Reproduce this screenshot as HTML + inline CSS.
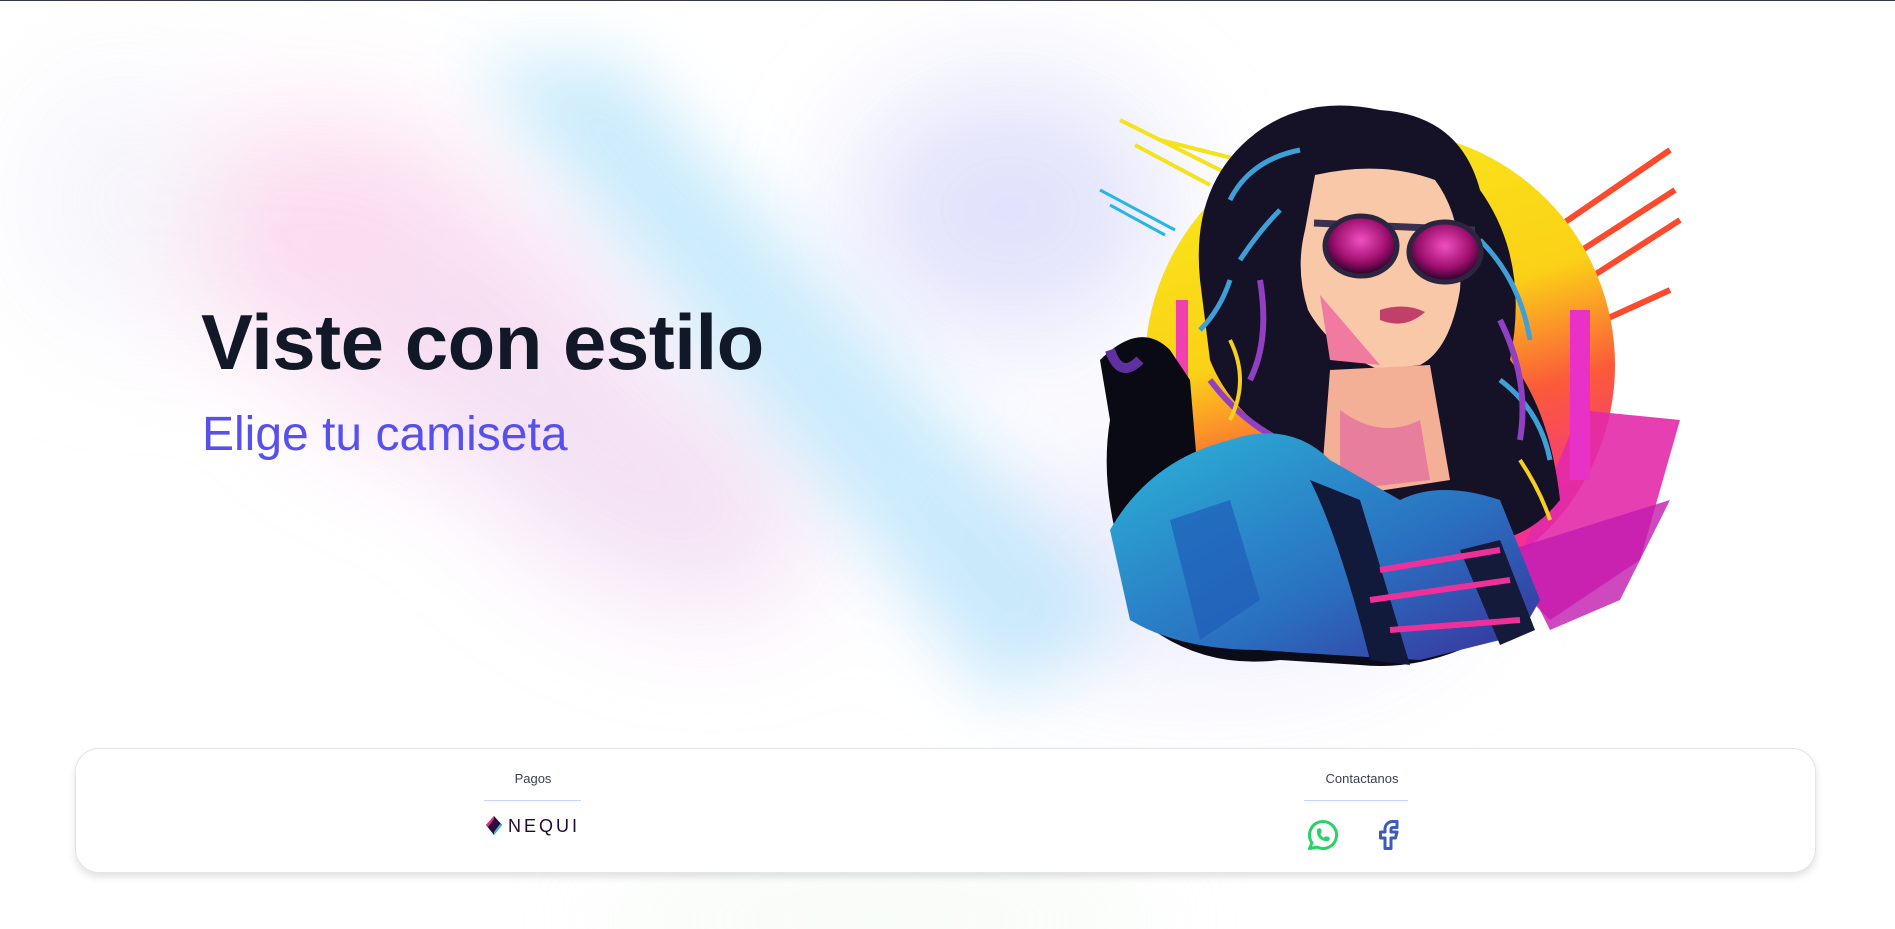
<!DOCTYPE html>
<html><head><meta charset="utf-8"><style>
*{margin:0;padding:0;box-sizing:border-box}
html,body{width:1895px;height:929px;overflow:hidden;background:#fff;font-family:"Liberation Sans",sans-serif}
.top{position:absolute;left:0;top:0;width:1895px;height:1px;background:#333645}
.bg{position:absolute;left:0;top:0;width:1895px;height:929px}
h1{position:absolute;left:201px;top:297px;font-size:78px;font-weight:700;color:#111827;letter-spacing:-0.5px;white-space:nowrap}
h2{position:absolute;left:202px;top:407px;font-size:48px;font-weight:400;color:#5850ec;white-space:nowrap}
.card{position:absolute;left:75px;top:748px;width:1741px;height:125px;background:#fff;border:1px solid #e3e5ea;border-radius:24px;box-shadow:0 4px 8px rgba(0,0,0,.12)}
.lbl{position:absolute;font-size:13px;color:#374151;text-align:center}
.ln{position:absolute;height:1px;background:#c7d2fe}
</style></head><body>
<svg class="bg" viewBox="0 0 1895 929">
<defs>
<filter id="b" x="-50%" y="-50%" width="200%" height="200%"><feGaussianBlur stdDeviation="60"/></filter>
<filter id="b2" x="-50%" y="-50%" width="200%" height="200%"><feGaussianBlur stdDeviation="35"/></filter>
</defs>
<g filter="url(#b)" opacity=".85">
<ellipse cx="310" cy="230" rx="190" ry="110" fill="#fbd3ea"/>
<ellipse cx="460" cy="330" rx="170" ry="120" fill="#f7d8f0"/>
<ellipse cx="630" cy="470" rx="200" ry="110" fill="#f1daf2" transform="rotate(30 630 470)"/>
<ellipse cx="1010" cy="210" rx="160" ry="130" fill="#dcdcfb"/>
<ellipse cx="1200" cy="560" rx="260" ry="120" fill="#ecebfd"/>
<ellipse cx="120" cy="200" rx="100" ry="130" fill="#f4f4fb"/>
</g>
<g filter="url(#b2)" opacity=".8">
<path d="M470 60 L620 60 L1130 620 L1000 700 Z" fill="#bde6fa"/>
</g>
<g filter="url(#b)" opacity=".35"><ellipse cx="880" cy="920" rx="300" ry="40" fill="#dbeedd"/></g>
</svg>
<div class="top"></div>
<h1>Viste con estilo</h1>
<h2>Elige tu camiseta</h2>

<svg style="position:absolute;left:1080px;top:80px" width="610" height="600" viewBox="0 0 610 600">
<defs>
<linearGradient id="sun" x1="0.2" y1="0" x2="0.5" y2="1"><stop offset="0" stop-color="#f8ea1a"/><stop offset=".45" stop-color="#fbd117"/><stop offset=".68" stop-color="#fb5a3a"/><stop offset="1" stop-color="#f52a9c"/></linearGradient>
<linearGradient id="jk" x1="0" y1="0" x2="1" y2="1"><stop offset="0" stop-color="#2cb4d8"/><stop offset=".6" stop-color="#2a6fc0"/><stop offset="1" stop-color="#3a2f9a"/></linearGradient>
<radialGradient id="gl" cx=".5" cy=".4" r=".6"><stop offset="0" stop-color="#f050c0"/><stop offset=".6" stop-color="#a01070"/><stop offset="1" stop-color="#200020"/></radialGradient>
</defs>
<path d="M40 40 L150 95 M55 65 L130 105 M80 60 L160 80" stroke="#f4e21c" stroke-width="4"/>
<path d="M20 110 L95 150 M30 125 L85 155" stroke="#27b6e0" stroke-width="3"/>
<path d="M590 70 L430 180 M595 110 L440 210 M600 140 L460 230 M590 210 L480 260" stroke="#fb4a2c" stroke-width="6"/>
<circle cx="300" cy="285" r="235" fill="url(#sun)"/>
<path d="M500 330 L600 340 L560 480 L470 540 L430 500 Z" fill="#e22aa8" opacity=".9"/>
<path d="M430 470 L590 420 L540 520 L470 550 Z" fill="#c21ab0" opacity=".8"/>
<rect x="490" y="230" width="20" height="170" fill="#e931c7"/>
<rect x="96" y="220" width="12" height="180" fill="#f040b0"/>
<path d="M20 280 Q60 240 90 270 L110 300 L120 420 L110 540 Q70 520 40 470 Q20 400 30 340 Z" fill="#0a0a14"/>
<path d="M60 280 Q40 300 30 270" stroke="#6030a0" stroke-width="10" fill="none"/>
<path d="M120 200 Q110 100 180 50 Q230 15 300 30 Q380 35 400 110 Q450 180 430 280 Q470 330 480 420 Q440 470 380 460 L310 440 L200 360 Q150 330 130 280 Z" fill="#151126"/>
<path d="M150 120 Q170 80 220 70 M160 180 Q180 150 200 130 M400 160 Q440 200 450 260 M420 300 Q460 330 470 380 M120 250 Q140 230 150 200" stroke="#3fa0d8" stroke-width="5" fill="none"/>
<path d="M180 200 Q190 260 170 300 M420 240 Q450 300 440 360 M130 300 Q160 340 200 360" stroke="#9040c0" stroke-width="6" fill="none"/>
<path d="M150 260 Q170 300 150 340 M440 380 Q460 410 470 440" stroke="#f6d020" stroke-width="4" fill="none"/>
<path d="M235 95 Q300 80 355 100 Q385 140 380 210 Q370 270 340 285 L300 290 Q250 270 228 230 Q215 190 225 150 Z" fill="#f8c8a8"/>
<path d="M240 215 Q270 250 300 285 L250 280 Z" fill="#f07aa0"/>
<path d="M250 290 L350 285 L370 400 L240 420 Z" fill="#f4b096"/>
<path d="M260 330 Q300 360 340 340 L350 400 L260 410 Z" fill="#e36aa0" opacity=".7"/>
<path d="M234 143 L395 150" stroke="#3a3050" stroke-width="7"/>
<ellipse cx="281" cy="166" rx="36" ry="30" fill="url(#gl)" stroke="#2c2540" stroke-width="5"/>
<ellipse cx="365" cy="172" rx="36" ry="30" fill="url(#gl)" stroke="#2c2540" stroke-width="5"/>
<path d="M300 230 Q325 222 345 232 Q325 250 300 240 Z" fill="#c0406a"/>
<path d="M60 540 Q120 590 200 580 L280 585 Q330 590 380 570 L430 540 L420 500 L100 500 Z" fill="#0c0c18"/>
<path d="M50 540 L30 450 Q70 380 150 360 Q210 340 250 380 L320 420 Q360 400 420 420 L460 520 L440 555 L340 580 Q250 575 180 570 Q100 570 50 540 Z" fill="url(#jk)"/>
<path d="M90 440 L150 420 L180 520 L120 560 Z" fill="#1f5db8" opacity=".7"/>
<path d="M230 400 Q260 460 290 580 L330 585 L280 420 Z" fill="#111a3a"/>
<path d="M380 470 L420 460 L455 550 L420 565 Z" fill="#141a3a"/>
<path d="M300 490 L420 470 M290 520 L430 500 M310 550 L440 540" stroke="#f0309a" stroke-width="6"/>
</svg>

<div class="card">
  <div class="lbl" style="left:407px;top:22px;width:100px">Pagos</div>
  <div class="ln" style="left:408px;top:51px;width:97px"></div>
  <svg style="position:absolute;left:408px;top:64px" width="100" height="26" viewBox="0 0 100 26">
    <path d="M10 3 L18 12 L10 22 L2 12 Z" fill="#2a0a40"/>
    <path d="M10 3 L2 12 L4 14 L10 6 Z" fill="#e0307a"/>
    <path d="M10 22 L18 12 L16 11 L10 19 Z" fill="#30c0d0"/>
    <text x="24" y="19" font-family="Liberation Sans,sans-serif" font-size="18" fill="#200a30" letter-spacing="3">NEQUI</text>
  </svg>
  <div class="lbl" style="left:1236px;top:22px;width:100px">Contactanos</div>
  <div class="ln" style="left:1228px;top:51px;width:104px"></div>
  <svg style="position:absolute;left:1229px;top:68px" width="36" height="36" viewBox="0 0 24 24" fill="none" stroke="#25d366" stroke-width="2" stroke-linecap="round" stroke-linejoin="round">
    <path d="M3 21l1.65-3.8a9 9 0 1 1 3.4 2.9L3 21"/>
    <path d="M9 10a.5.5 0 0 0 1 0V9a.5.5 0 0 0-1 0v1a5 5 0 0 0 5 5h1a.5.5 0 0 0 0-1h-1a.5.5 0 0 0 0 1"/>
  </svg>
  <svg style="position:absolute;left:1294px;top:68px" width="36" height="36" viewBox="0 0 24 24" fill="none" stroke="#3b5cb8" stroke-width="2" stroke-linecap="round" stroke-linejoin="round">
    <path d="M7 10v4h3v7h4v-7h3l1-4h-4V8a1 1 0 0 1 1-1h3V3h-3a5 5 0 0 0-5 5v2H7"/>
  </svg>
</div>
</body></html>
